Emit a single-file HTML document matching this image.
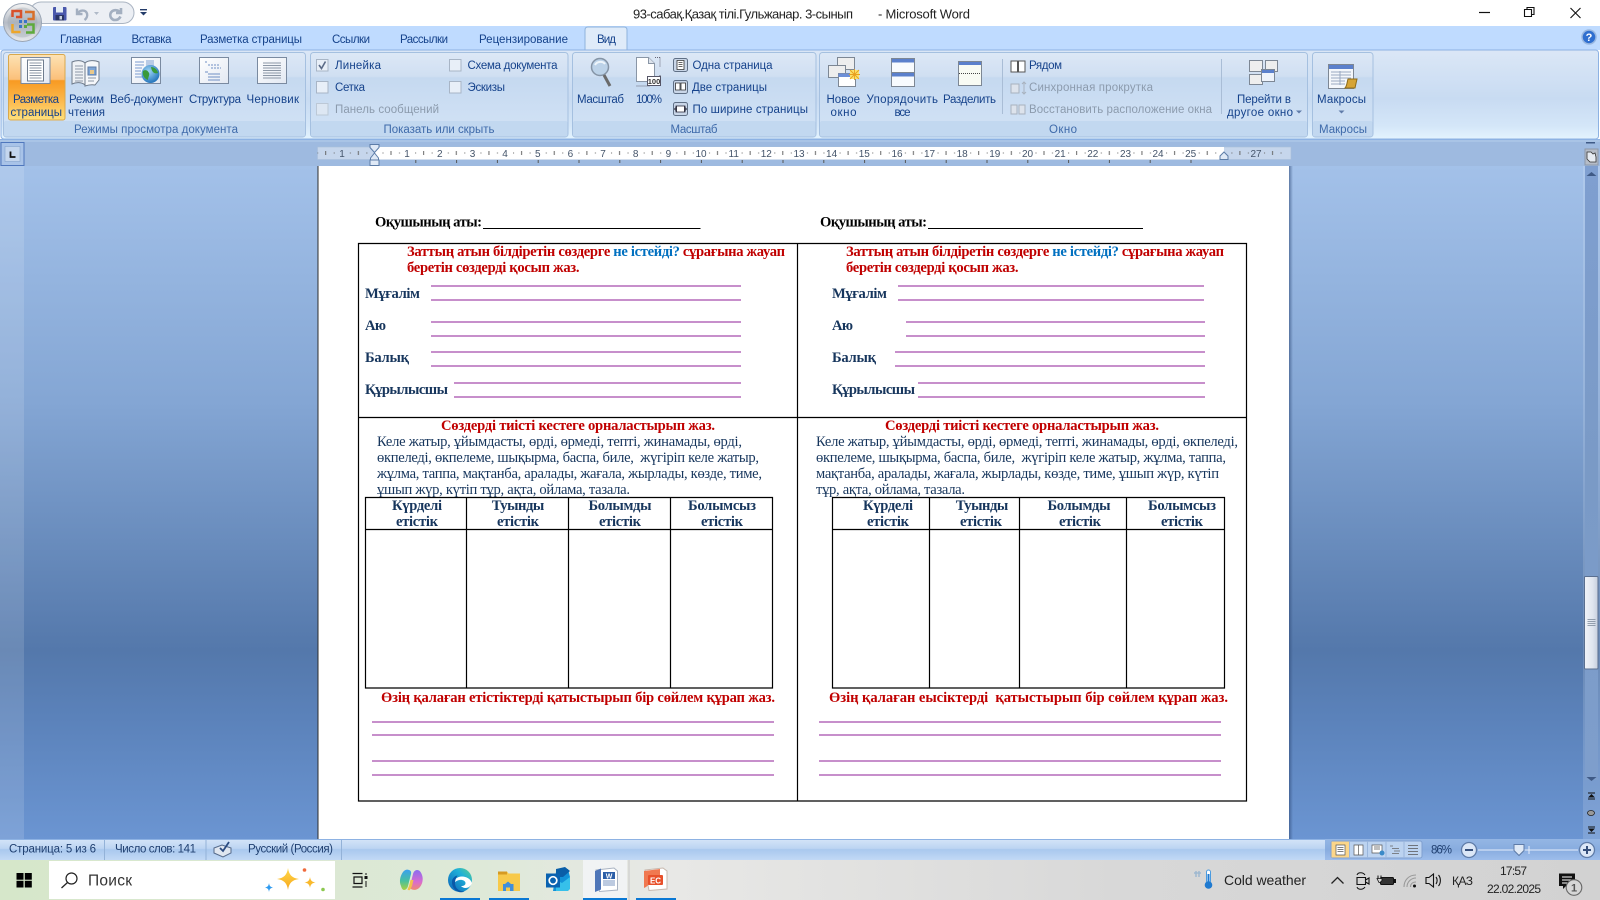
<!DOCTYPE html>
<html lang="ru">
<head>
<meta charset="utf-8">
<title>Microsoft Word</title>
<style>
html,body{margin:0;padding:0;background:#fff;width:1600px;height:900px;overflow:hidden}
svg{display:block}
text{white-space:pre}
.t{font:11.5px "Liberation Sans",sans-serif;fill:#15428b}
.g{font:11.5px "Liberation Sans",sans-serif;fill:#3e6aaa}
.d{font:11.5px "Liberation Sans",sans-serif;fill:#8c9bad}
.n{font:10px "Liberation Sans",sans-serif;fill:#44546a;text-anchor:middle}
.w{font:13px "Liberation Sans",sans-serif;fill:#222}
.s{font:11.5px "Liberation Sans",sans-serif;fill:#1f3f70}
.b{font:bold 14.6px "Liberation Serif",serif;fill:#000}
.r{font:bold 14.6px "Liberation Serif",serif;fill:#c00000}
.l{font:bold 14.6px "Liberation Serif",serif;fill:#17365d}
.p{font:14.6px "Liberation Serif",serif;fill:#17365d}
.c{font:bold 14.6px "Liberation Serif",serif;fill:#17365d;text-anchor:middle}
.k{font:14px "Liberation Sans",sans-serif;fill:#222}
.m{font:12px "Liberation Sans",sans-serif;fill:#222}
.tbl{stroke:#000;stroke-width:1.2;fill:none}
.pl{stroke:#c78fcb;stroke-width:2}
</style>
</head>
<body>
<svg width="1600" height="900" viewBox="0 0 1600 900" xmlns="http://www.w3.org/2000/svg">
<defs>
<linearGradient id="bg" x1="0" y1="0" x2="0" y2="1"><stop offset="0" stop-color="#a3c1e9"/><stop offset=".35" stop-color="#84a6d4"/><stop offset=".72" stop-color="#5478ab"/><stop offset=".82" stop-color="#5b82ba"/><stop offset="1" stop-color="#6b95d2"/></linearGradient>
<linearGradient id="rib" x1="0" y1="0" x2="0" y2="1"><stop offset="0" stop-color="#dbe7f6"/><stop offset=".55" stop-color="#c8dbf2"/><stop offset=".85" stop-color="#d4e6f8"/><stop offset="1" stop-color="#e3f3fe"/></linearGradient>
<linearGradient id="grp" x1="0" y1="0" x2="0" y2="1"><stop offset="0" stop-color="#dde8f6"/><stop offset=".28" stop-color="#d0dff2"/><stop offset=".3" stop-color="#c5d9f0"/><stop offset="1" stop-color="#d3e3f6"/></linearGradient>
<linearGradient id="act" x1="0" y1="0" x2="0" y2="1"><stop offset="0" stop-color="#fde3b4"/><stop offset=".38" stop-color="#fbc07a"/><stop offset=".4" stop-color="#f89a22"/><stop offset=".7" stop-color="#fbb84c"/><stop offset="1" stop-color="#fee07c"/></linearGradient>
<linearGradient id="btn" x1="0" y1="0" x2="1" y2="1"><stop offset="0" stop-color="#fff"/><stop offset="1" stop-color="#e2e8f2"/></linearGradient>
<linearGradient id="off" x1="0" y1="0" x2="0" y2="1"><stop offset="0" stop-color="#f4f4f4"/><stop offset=".5" stop-color="#b6bcc6"/><stop offset="1" stop-color="#e8eaee"/></linearGradient>
<linearGradient id="stat" x1="0" y1="0" x2="0" y2="1"><stop offset="0" stop-color="#d5e5f8"/><stop offset=".45" stop-color="#bcd4f2"/><stop offset=".5" stop-color="#a9c8ee"/><stop offset="1" stop-color="#c2d9f5"/></linearGradient>
<linearGradient id="stat2" x1="0" y1="0" x2="0" y2="1"><stop offset="0" stop-color="#94b6e4"/><stop offset=".5" stop-color="#88acdf"/><stop offset="1" stop-color="#9dbdeb"/></linearGradient>
<linearGradient id="task" x1="0" y1="0" x2="1" y2="0"><stop offset="0" stop-color="#d6e7ca"/><stop offset=".3" stop-color="#dee9d8"/><stop offset=".42" stop-color="#e8e8e6"/><stop offset=".7" stop-color="#d8d8d8"/><stop offset="1" stop-color="#d2d2d2"/></linearGradient>
<linearGradient id="thumb" x1="0" y1="0" x2="1" y2="0"><stop offset="0" stop-color="#f0f3f8"/><stop offset=".6" stop-color="#dfe5ef"/><stop offset="1" stop-color="#c6cfdd"/></linearGradient>
<linearGradient id="track" x1="0" y1="0" x2="0" y2="1"><stop offset="0" stop-color="#7f9fd0"/><stop offset=".5" stop-color="#7a9ac6"/><stop offset="1" stop-color="#7e9ecc"/></linearGradient>
<linearGradient id="edge" x1="1" y1="0" x2="0" y2="1"><stop offset="0" stop-color="#5fd08a"/><stop offset=".35" stop-color="#1fb0d8"/><stop offset="1" stop-color="#0c62b8"/></linearGradient>
<linearGradient id="copl" x1="0" y1="0" x2="0" y2="1"><stop offset="0" stop-color="#3aa0f0"/><stop offset=".55" stop-color="#46c0a0"/><stop offset="1" stop-color="#a8d040"/></linearGradient>
<linearGradient id="copr" x1="0" y1="0" x2="0" y2="1"><stop offset="0" stop-color="#8a6cf0"/><stop offset=".6" stop-color="#d86cd0"/><stop offset="1" stop-color="#f08a70"/></linearGradient>
<linearGradient id="star" x1="0" y1="0" x2="0" y2="1"><stop offset="0" stop-color="#ffd84a"/><stop offset="1" stop-color="#f7a81e"/></linearGradient>
<linearGradient id="shade" x1="0" y1="0" x2="1" y2="0"><stop offset="0" stop-color="#2f4a78" stop-opacity=".6"/><stop offset="1" stop-color="#2f4a78" stop-opacity="0"/></linearGradient>
<radialGradient id="globe" cx=".4" cy=".35" r=".7"><stop offset="0" stop-color="#9fd6f5"/><stop offset="1" stop-color="#1d6fb8"/></radialGradient>
<g id="frame"><rect x=".5" y=".5" width="29" height="26" fill="url(#btn)" stroke="#7a8aa0"/></g>
<g id="lines"><path d="M0 0h12M0 2.500h12M0 5h12M0 7.500h12M0 10h12M0 12.500h12M0 15h12" stroke="#8c97a6" stroke-width="1" fill="none"/></g>
<pattern id="rt" x="374.5" y="147" width="32.65" height="12" patternUnits="userSpaceOnUse"><rect x="8" y="5.5" width="1" height="1" fill="#666"/><rect x="16" y="4" width="1" height="4" fill="#666"/><rect x="24.5" y="5.5" width="1" height="1" fill="#666"/></pattern>
<pattern id="tabs" x="374.5" y="160" width="40.8" height="6" patternUnits="userSpaceOnUse"><rect x="0" y="0" width="1" height="3" fill="#555"/></pattern>
</defs>

<!-- title bar -->
<rect width="1600" height="26" fill="#fff"/>
<rect x="30" y="2" width="104" height="21.500" rx="11" fill="#eceff4" stroke="#aab4c2"/>
<!-- QAT icons -->
<rect x="53" y="7" width="13.500" height="13.500" rx="1" fill="#4a58ac"/><rect x="56" y="7" width="7" height="5.500" fill="#e4ecf6"/><rect x="55.500" y="15" width="8.500" height="5.500" fill="#2a3566"/><rect x="59.500" y="16" width="2.500" height="3.500" fill="#c8d2e0"/>
<path d="M77 8.500v5.500h5.500M77.500 14c1.500-4 8-5 9.500-.5 .7 2.500-.5 5-2.500 6.500" fill="none" stroke="#a3afc0" stroke-width="2.400"/>
<path d="M94 12h5l-2.500 3z" fill="#b0bac8"/>
<path d="M121 8v5h-5M120 12.500c-2-3.500-8-3-9.500 1-1 3.500 1.500 6.500 4.500 6.500s4.500-1.500 5.500-3.500" fill="none" stroke="#a3afc0" stroke-width="2.600"/>
<rect x="140" y="9" width="7" height="1.400" fill="#243c6a"/><path d="M140 12h7l-3.500 3.500z" fill="#243c6a"/>
<!-- window text -->
<text x="633" y="18.500" class="w" textLength="220">93-сабақ.Қазақ тілі.Гульжанар. 3-сынып</text>
<text x="878" y="18.500" class="w" textLength="92">- Microsoft Word</text>
<path d="M1479 12.500h11" stroke="#111" stroke-width="1.200"/>
<path d="M1524.500 9.500h7v7h-7zM1527 9.500v-2h7v7h-2.500" fill="none" stroke="#111" stroke-width="1.100"/>
<path d="M1570.500 8l10 10M1580.500 8l-10 10" stroke="#111" stroke-width="1.100"/>

<!-- tab strip -->
<rect y="26" width="1600" height="24" fill="#bfdbff"/>
<text x="60" y="43" class="t" textLength="42">Главная</text>
<text x="131.500" y="43" class="t" textLength="40">Вставка</text>
<text x="200" y="43" class="t" textLength="102">Разметка страницы</text>
<text x="332" y="43" class="t" textLength="38">Ссылки</text>
<text x="400" y="43" class="t" textLength="48">Рассылки</text>
<text x="479" y="43" class="t" textLength="89">Рецензирование</text>
<path d="M585 50.500V30q0-3 3-3h36q3 0 3 3v20.500z" fill="#dfebf9" stroke="#8fb3dc"/>
<text x="597" y="43" class="t" textLength="19">Вид</text>
<circle cx="1589" cy="37" r="7" fill="#2f6fd0" stroke="#9ab8e0" stroke-width="1.500"/><text x="1589" y="41" font-family="Liberation Sans" font-size="11" font-weight="bold" fill="#fff" text-anchor="middle">?</text>

<!-- ribbon -->
<rect x="1" y="50" width="1597.500" height="89" rx="3" fill="url(#rib)" stroke="#8db2e3"/>
<rect x="0" y="139" width="1600" height="1" fill="#8db2e3"/>
<!-- groups -->
<g fill="url(#grp)" stroke="#a5c0e0">
<rect x="3.500" y="52.500" width="302" height="84.500" rx="3"/>
<rect x="310.500" y="52.500" width="257.500" height="84.500" rx="3"/>
<rect x="572.500" y="52.500" width="243.500" height="84.500" rx="3"/>
<rect x="819.500" y="52.500" width="488" height="84.500" rx="3"/>
<rect x="1312.500" y="52.500" width="60.500" height="84.500" rx="3"/>
</g>
<g fill="#c2d8f0">
<rect x="4" y="121" width="301" height="15.500" rx="2"/>
<rect x="311" y="121" width="256.500" height="15.500" rx="2"/>
<rect x="573" y="121" width="242.500" height="15.500" rx="2"/>
<rect x="820" y="121" width="487" height="15.500" rx="2"/>
<rect x="1313" y="121" width="59.500" height="15.500" rx="2"/>
</g>
<text x="74" y="133" class="g" textLength="164">Режимы просмотра документа</text>
<text x="383.500" y="133" class="g" textLength="111">Показать или скрыть</text>
<text x="670.500" y="133" class="g" textLength="47">Масштаб</text>
<text x="1049" y="133" class="g" textLength="28">Окно</text>
<text x="1319" y="133" class="g" textLength="48">Макросы</text>

<!-- active button -->
<rect x="8.500" y="54.500" width="56.500" height="65.500" rx="2" fill="url(#act)" stroke="#d9a84c"/>
<!-- view icons -->
<g transform="translate(20.500,57)"><use href="#frame"/><rect x="7" y="3" width="16" height="21" fill="#fff" stroke="#6f7c8e"/><use href="#lines" x="9" y="6"/></g>
<!-- reading -->
<g transform="translate(71,59)"><path d="M1 3c4-2 10-2 13 1v22c-3-3-9-3-13-1z" fill="#eef1f5" stroke="#6e7a8a"/><path d="M14 4c3-3 10-3 14-1v18l-4 5c-3-.5-7 0-10 1z" fill="#f5f7fa" stroke="#6e7a8a"/><path d="M4 7h8M4 10h8M4 13h8M4 16h8M4 19h8M4 22h8" stroke="#8c97a6"/><rect x="17" y="8" width="8" height="8" fill="#7fa6d6" stroke="#5d7ca8"/><rect x="19" y="11" width="4" height="4" fill="#e9c88a"/><path d="M17 19h8M17 22h6" stroke="#8c97a6"/></g>
<!-- web -->
<g transform="translate(131,57)"><use href="#frame"/><path d="M4 5h9M4 8h9M4 11h7M4 14h6M4 17h6M4 20h7" stroke="#7a9bd0"/><rect x="15" y="3" width="8" height="6" fill="#b9cbe6"/><circle cx="19.500" cy="17" r="9" fill="url(#globe)"/><path d="M12 14c3-2 5 0 6 2s-1 4-1 7c-3-1-6-4-5-9zM20 10c3 0 6 2 7 6-3 1-6 0-7-6z" fill="#3a9a3a"/></g>
<!-- structure -->
<g transform="translate(199,57)"><use href="#frame"/><path d="M6 5h3M9 8h11M12 11h10" stroke="#6f8fc4" stroke-dasharray="2 1"/><path d="M6 15h3M9 17h12M9 20h12M9 23h12" stroke="#6f8fc4"/></g>
<!-- draft -->
<g transform="translate(257,57)"><use href="#frame"/><path d="M6 6h18M6 8.500h18M6 11h18M6 13.500h18M6 16h18M6 18.500h18M6 21h18" stroke="#8c97a6"/></g>
<text x="13" y="103" class="t" textLength="46">Разметка</text><text x="10.500" y="116" class="t" textLength="51.500">страницы</text>
<text x="69" y="103" class="t" textLength="35">Режим</text><text x="68" y="116" class="t" textLength="37">чтения</text>
<text x="110" y="103" class="t" textLength="73">Веб-документ</text>
<text x="189" y="103" class="t" textLength="52">Структура</text>
<text x="246.500" y="103" class="t" textLength="52.500">Черновик</text>
<!-- checkboxes -->
<g fill="#e8eff8" stroke="#a8b5c6">
<rect x="316.500" y="59.500" width="11.500" height="11.500"/>
<rect x="316.500" y="81.500" width="11.500" height="11.500"/>
<rect x="449.500" y="59.500" width="11.500" height="11.500"/>
<rect x="449.500" y="81.500" width="11.500" height="11.500"/>
</g>
<rect x="316.500" y="103.500" width="11.500" height="11.500" fill="#dde7f3" stroke="#bcc8d6"/>
<path d="M319 65l2.500 3.500 4-7" fill="none" stroke="#5b6b88" stroke-width="1.600"/>
<text x="335" y="69" class="t" textLength="46">Линейка</text>
<text x="335" y="91" class="t" textLength="30">Сетка</text>
<text x="335" y="113" class="d" textLength="104">Панель сообщений</text>
<text x="467.500" y="69" class="t" textLength="90">Схема документа</text>
<text x="467.500" y="91" class="t" textLength="37.500">Эскизы</text>
<!-- zoom group -->
<g transform="translate(591,57)"><circle cx="9" cy="10" r="8.500" fill="#bcd2e8" stroke="#8594a6" stroke-width="1.500"/><path d="M4 8c2-4 8-4 10-1" fill="none" stroke="#eef5fb" stroke-width="2"/><path d="M13 18l6 11" stroke="#6a6a6a" stroke-width="3"/></g>
<text x="577" y="103" class="t" textLength="47">Масштаб</text>
<g transform="translate(636,57)"><path d="M.500 .500h12l6 6v18h-18z" fill="#fff" stroke="#8a96a6"/><path d="M12.500 .500v6h6" fill="#dde3ec" stroke="#8a96a6"/><path d="M19 .500h5M24 .500v10M24 18v6" stroke="#667" stroke-dasharray="1 1"/><path d="M.500 29h14" stroke="#667" stroke-dasharray="1 1"/><rect x="11.500" y="19.500" width="13" height="9" fill="#fff" stroke="#556"/><text x="18" y="27" font-family="Liberation Sans" font-size="7.500" font-weight="bold" fill="#333" text-anchor="middle">100</text></g>
<text x="636" y="103" class="t" textLength="26">100%</text>
<g fill="#c9d6e8" stroke="#5f6f85"><rect x="673.500" y="58.500" width="14" height="13" rx="2"/><rect x="673.500" y="80.500" width="14" height="13" rx="2"/><rect x="673.500" y="102.500" width="14" height="13" rx="2"/></g>
<path d="M677 60.500h7v9h-7zM678.500 62.500h4M678.500 64.500h4M678.500 66.500h4" fill="#fff" stroke="#333" stroke-width=".8"/>
<path d="M675.500 83h4.500v7h-4.500zM681 83h4.500v7H681z" fill="#fff" stroke="#333" stroke-width=".8"/>
<path d="M676 106h9v6h-9zM674.500 109l2-2v4zM686.500 109l-2-2v4z" fill="#fff" stroke="#223" stroke-width=".8"/>
<text x="692.500" y="69" class="t" textLength="80">Одна страница</text>
<text x="692" y="91" class="t" textLength="75">Две страницы</text>
<text x="692.500" y="113" class="t" textLength="115.500">По ширине страницы</text>
<!-- window group -->
<g transform="translate(828,57)"><rect x="9.500" y=".500" width="17" height="12" fill="#eee" stroke="#7d8794"/><rect x=".500" y="8.500" width="17" height="12" fill="#eee" stroke="#7d8794"/><rect x="10.500" y="16.500" width="17" height="13" fill="#fff" stroke="#7d8794"/><rect x="10.500" y="16.500" width="17" height="3.500" fill="#6d8fd8"/><rect x="22" y="13" width="9" height="9" fill="#fbe26a"/><path d="M22 13l9 9M31 13l-9 9M26.500 12v11M21 17.500h11" stroke="#e8a020" stroke-width=".9"/></g>
<text x="826.500" y="103" class="t" textLength="33.500">Новое</text><text x="830.500" y="116" class="t" textLength="26">окно</text>
<g transform="translate(891,58)"><rect x=".500" y=".500" width="23" height="28" fill="#f8fbfe" stroke="#7d8794"/><rect x="1" y="1" width="22" height="3.500" fill="#5b80cc"/><rect x="1" y="15" width="22" height="3.500" fill="#5b80cc"/><path d="M.500 14.500h23" stroke="#7d8794"/></g>
<text x="866.500" y="103" class="t" textLength="71.500">Упорядочить</text><text x="894.500" y="116" class="t" textLength="16">все</text>
<g transform="translate(958,61)"><rect x=".500" y=".500" width="23" height="24" fill="#f8fbf4" stroke="#7d8794"/><rect x="1" y="1" width="22" height="3" fill="#5b80cc"/><path d="M1 12.500h22" stroke="#444" stroke-dasharray="1 1"/></g>
<text x="943" y="103" class="t" textLength="53">Разделить</text>
<path d="M1002.500 59v55M1221.500 59v55" stroke="#a9bdd6"/>
<path d="M1011 61h6.500v11h-6.500zM1018.500 61h6.500v11h-6.500z" fill="#fff" stroke="#555"/>
<path d="M1011 84h8v9h-8z" fill="#dde3ec" stroke="#a8b2be"/><path d="M1024 82v12M1022 84l2-2 2 2M1022 92l2 2 2-2" fill="none" stroke="#a8b2be"/>
<path d="M1011 105h6v9h-6zM1019 105h6v9h-6z" fill="#dde3ec" stroke="#a8b2be"/>
<text x="1029" y="69" class="t" textLength="33">Рядом</text>
<text x="1029" y="91" class="d" textLength="124">Синхронная прокрутка</text>
<text x="1029" y="113" class="d" textLength="183">Восстановить расположение окна</text>
<g transform="translate(1249,60)" stroke="#7d8794"><rect x=".500" y=".500" width="13" height="11" fill="#eee"/><rect x="16.500" y=".500" width="12" height="11" fill="#eee"/><rect x=".500" y="14.500" width="13" height="10" fill="#eee"/><rect x="12.500" y="9.500" width="13" height="12" fill="#eef3fb"/><rect x="13" y="10" width="12" height="3" fill="#5b80cc" stroke="none"/></g>
<text x="1237" y="103" class="t" textLength="54">Перейти в</text><text x="1227" y="116" class="t" textLength="66">другое окно</text>
<path d="M1296 110.500h6l-3 3z" fill="#5f7ba8"/>
<!-- macros -->
<g transform="translate(1328,64)"><rect x=".500" y=".500" width="25" height="24" fill="#f4f7fb" stroke="#7d8794"/><rect x="1" y="1" width="24" height="4" fill="#5b80cc"/><path d="M3 8h20M3 11h20M3 14h20M3 17h14M3 20h14M12 7v14" stroke="#9aa9c0"/><path d="M20 15h9l-2 9h-10c2-2 2-6 3-9z" fill="#d6a436" stroke="#8d6b18"/></g>
<text x="1317" y="103" class="t" textLength="49">Макросы</text>
<path d="M1338.500 110.500h6l-3 3z" fill="#5f7ba8"/>

<!-- ruler bar -->
<rect y="140" width="1600" height="26" fill="#9ebae0"/>
<rect x="0" y="140" width="1600" height="2" fill="#a9c4e6"/>
<rect x="317.500" y="147" width="973.500" height="12.500" fill="#c6d6ec" stroke="#a9bedb" stroke-width=".6"/>
<rect x="375" y="147" width="849" height="12.500" fill="#fff"/>
<rect x="317.500" y="147" width="973.500" height="12.500" fill="url(#rt)"/>
<rect x="375" y="160" width="849" height="4" fill="url(#tabs)"/>
<text x="342" y="157" class="n">1</text>
<text x="407" y="157" class="n">1</text><text x="439.800" y="157" class="n">2</text><text x="472.500" y="157" class="n">3</text><text x="505" y="157" class="n">4</text><text x="537.800" y="157" class="n">5</text><text x="570.400" y="157" class="n">6</text><text x="603" y="157" class="n">7</text><text x="635.700" y="157" class="n">8</text><text x="668.400" y="157" class="n">9</text><text x="701" y="157" class="n">10</text><text x="733.700" y="157" class="n">11</text><text x="766.300" y="157" class="n">12</text><text x="799" y="157" class="n">13</text><text x="831.600" y="157" class="n">14</text><text x="864.300" y="157" class="n">15</text><text x="897" y="157" class="n">16</text><text x="929.500" y="157" class="n">17</text><text x="962.200" y="157" class="n">18</text><text x="994.800" y="157" class="n">19</text><text x="1027.500" y="157" class="n">20</text><text x="1060.200" y="157" class="n">21</text><text x="1092.800" y="157" class="n">22</text><text x="1125.500" y="157" class="n">23</text><text x="1158" y="157" class="n">24</text><text x="1190.700" y="157" class="n">25</text><text x="1256" y="157" class="n">27</text>
<path d="M370 144.500h9v3l-4.500 5-4.500-5zM370.500 158l4-5 4 5v2h-8z" fill="#dfe9f6" stroke="#5d7da8"/><rect x="370" y="160" width="9" height="5.500" fill="#dfe9f6" stroke="#5d7da8"/>
<path d="M1224 152l4 4v3.500h-8V156z" fill="#dfe9f6" stroke="#5d7da8"/>
<!-- tab selector -->
<rect x="1" y="142.500" width="23" height="23" fill="#a8c3e8" stroke="#4f77bd"/><rect x="5" y="146.500" width="15" height="15" fill="#c4d6ee" stroke="#86a4cd" stroke-width=".6"/><path d="M10.500 151.500v5.500h5" fill="none" stroke="#111" stroke-width="1.800"/>

<!-- doc bg -->
<rect y="166" width="1600" height="673" fill="url(#bg)"/>
<rect y="166" width="24" height="673" fill="#fff" opacity=".13"/>
<rect x="1583" y="166" width="17" height="673" fill="#fff" opacity=".14"/>
<rect x="1585" y="166" width="13" height="614" fill="url(#track)"/>
<rect x="1585" y="149" width="13" height="16" fill="#b5bcc7" stroke="#8d98a8"/>
<path d="M1587 152h4l2 2 2-1 1 4v5h-6l-3-3z" fill="#e6ebf2" stroke="#333" stroke-width=".8"/>
<rect x="1586" y="142" width="9" height="1.500" fill="#3f5a86"/>
<path d="M1586.500 176h10l-5-4z" fill="#3f5a86"/>
<rect x="1584.500" y="576.500" width="13.500" height="92.500" rx="1" fill="url(#thumb)" stroke="#5a6f90"/>
<path d="M1587.500 619.500h8M1587.500 621.500h8M1587.500 623.500h8M1587.500 625.500h8" stroke="#7a8798" stroke-width=".8"/>
<path d="M1586.500 777h10l-5 4z" fill="#3f5a86"/>
<path d="M1588 793h7M1588 799h7" stroke="#111" stroke-width="1"/><path d="M1588 797.500h7l-3.500-3.500z" fill="#111"/>
<ellipse cx="1591" cy="813" rx="3.500" ry="2.500" fill="#999" stroke="#222" stroke-width=".8"/>
<path d="M1588 827h7M1588 833h7" stroke="#111" stroke-width="1"/><path d="M1588 828.500h7l-3.500 3.500z" fill="#111"/>

<!-- page -->
<rect x="1289" y="166" width="4" height="673" fill="url(#shade)"/>
<rect x="318" y="166" width="971" height="673" fill="#fff"/>
<rect x="317.500" y="166" width="1" height="673" fill="#2c2c2c"/>

<!-- doc content -->
<text x="375" y="226.500" class="b" textLength="107">Оқушының аты:</text>
<path d="M483 228.500h217.500" stroke="#000" stroke-width="1"/>
<text x="820" y="226.500" class="b" textLength="107">Оқушының аты:</text>
<path d="M928 228.500h215" stroke="#000" stroke-width="1"/>

<!-- outer table -->
<path class="tbl" d="M358.500 243.500H1246.500V801H358.500zM797.500 243.500V801M358.500 417.500H1246.500"/>

<!-- cell 1 -->
<text x="407" y="256" class="r" textLength="378">Заттың атын білдіретін сөздерге <tspan fill="#0070c0">не істейді?</tspan> сұрағына жауап</text>
<text x="407" y="272" class="r" textLength="172.500">беретін сөздерді қосып жаз.</text>
<text x="365" y="298" class="l" textLength="55">Мұғалім</text>
<text x="365" y="330" class="l" textLength="21">Аю</text>
<text x="365" y="362" class="l" textLength="44">Балық</text>
<text x="365" y="394" class="l" textLength="83">Құрылысшы</text>
<path class="pl" d="M431 286h310M431 300h310M431 322h310M431 336h310M431 352h310M431 366h310M454 383h287M454 397h287"/>

<!-- cell 2 -->
<text x="846" y="256" class="r" textLength="378">Заттың атын білдіретін сөздерге <tspan fill="#0070c0">не істейді?</tspan> сұрағына жауап</text>
<text x="846" y="272" class="r" textLength="172.500">беретін сөздерді қосып жаз.</text>
<text x="832" y="298" class="l" textLength="55">Мұғалім</text>
<text x="832" y="330" class="l" textLength="21">Аю</text>
<text x="832" y="362" class="l" textLength="44">Балық</text>
<text x="832" y="394" class="l" textLength="83">Құрылысшы</text>
<path class="pl" d="M898 286h306M898 300h306M906 322h299M906 336h299M895 352h310M895 366h310M918 383h287M918 397h287"/>

<!-- cell 3 -->
<text x="441" y="430" class="r" textLength="274">Сөздерді тиісті кестеге орналастырып жаз.</text>
<text x="377" y="446" class="p" textLength="365">Келе жатыр, ұйымдасты, өрді, өрмеді, тепті, жинамады, өрді,</text>
<text x="377" y="462" class="p" textLength="382">өкпеледі, өкпелеме, шықырма, баспа, биле,  жүгіріп келе жатыр,</text>
<text x="377" y="478" class="p" textLength="385">жұлма, таппа, мақтанба, аралады, жағала, жырлады, көзде, тиме,</text>
<text x="377" y="494" class="p" textLength="253">ұшып жүр, күтіп тұр, ақта, ойлама, тазала.</text>
<path class="tbl" d="M365.500 497.500H772.500V688H365.500zM365.500 529.500H772.500M466.500 497.500V688M568.500 497.500V688M670.500 497.500V688"/>
<text x="417" y="510" class="c" textLength="50">Күрделі</text><text x="417" y="526" class="c" textLength="42">етістік</text>
<text x="518" y="510" class="c" textLength="52.500">Туынды</text><text x="518" y="526" class="c" textLength="42">етістік</text>
<text x="620" y="510" class="c" textLength="63">Болымды</text><text x="620" y="526" class="c" textLength="42">етістік</text>
<text x="722" y="510" class="c" textLength="68">Болымсыз</text><text x="722" y="526" class="c" textLength="42">етістік</text>
<text x="381" y="702" class="r" textLength="394">Өзің қалаған етістіктерді қатыстырып бір сөйлем құрап жаз.</text>
<path class="pl" d="M372 722h402M372 735h402M372 761h402M372 775h402"/>

<!-- cell 4 -->
<text x="885" y="430" class="r" textLength="274">Сөздерді тиісті кестеге орналастырып жаз.</text>
<text x="816" y="446" class="p" textLength="422">Келе жатыр, ұйымдасты, өрді, өрмеді, тепті, жинамады, өрді, өкпеледі,</text>
<text x="816" y="462" class="p" textLength="410">өкпелеме, шықырма, баспа, биле,  жүгіріп келе жатыр, жұлма, таппа,</text>
<text x="816" y="478" class="p" textLength="403">мақтанба, аралады, жағала, жырлады, көзде, тиме, ұшып жүр, күтіп</text>
<text x="816" y="494" class="p" textLength="149">тұр, ақта, ойлама, тазала.</text>
<path class="tbl" d="M832.500 497.500H1224.500V688H832.500zM832.500 529.500H1224.500M929.500 497.500V688M1019.500 497.500V688M1126.500 497.500V688"/>
<text x="888" y="510" class="c" textLength="50">Күрделі</text><text x="888" y="526" class="c" textLength="42">етістік</text>
<text x="982" y="510" class="c" textLength="52.500">Туынды</text><text x="981" y="526" class="c" textLength="42">етістік</text>
<text x="1079" y="510" class="c" textLength="63">Болымды</text><text x="1080" y="526" class="c" textLength="42">етістік</text>
<text x="1182" y="510" class="c" textLength="68">Болымсыз</text><text x="1182" y="526" class="c" textLength="42">етістік</text>
<text x="829" y="702" class="r" textLength="399">Өзің қалаған еысіктерді  қатыстырып бір сөйлем құрап жаз.</text>
<path class="pl" d="M819 722h402M819 735h402M819 761h402M819 775h402"/>

<!-- status bar -->
<rect y="839" width="1600" height="21" fill="url(#stat)"/>
<rect y="839" width="1600" height="1" fill="#8db2e3"/>
<path d="M104.500 840v20M206 840v20M341.500 840v20" stroke="#93b2d8"/>
<text x="9" y="852.500" class="s" textLength="87">Страница: 5 из 6</text>
<text x="115" y="852.500" class="s" textLength="81">Число слов: 141</text>
<path d="M214 848l8-3 9 3v5l-8 4-9-4z" fill="#dfe6f0" stroke="#556a8a"/><path d="M220 848l3 3 6-9" fill="none" stroke="#2a4a80" stroke-width="1.800"/>
<text x="248" y="852.500" class="s" textLength="85">Русский (Россия)</text>
<rect x="1325" y="839" width="275" height="21" fill="url(#stat2)"/>
<rect x="1331" y="841" width="91" height="17" rx="2" fill="#bcd3f0" stroke="#7f9fcf"/>
<rect x="1331.500" y="841.500" width="18" height="16" fill="#fcd68a"/>
<path d="M1349.500 841v17M1367.500 841v17M1386 841v17M1404 841v17" stroke="#9ab6dc"/>
<path d="M1336 845h9v10h-9zM1337.500 847.500h6M1337.500 849.500h6M1337.500 851.500h6" fill="#fff" stroke="#555" stroke-width=".7"/>
<path d="M1354 845h4.500v10H1354zM1358.500 845h4.500v10h-4.500z" fill="#fff" stroke="#555" stroke-width=".7"/>
<path d="M1372 845h10v8h-10zM1374 847h6M1374 849h6" fill="#fff" stroke="#555" stroke-width=".7"/><circle cx="1382" cy="853" r="2.500" fill="#3a8ac8"/>
<path d="M1390 846h3M1392 848.500h7M1394 851h6M1392 853.500h7" stroke="#666" stroke-width=".8"/>
<path d="M1408 845.500h10M1408 848.500h10M1408 851.500h10M1408 854.500h10" stroke="#555" stroke-width=".8"/>
<text x="1431" y="853.500" class="s" fill="#15428b" textLength="21">86%</text>
<circle cx="1469" cy="850" r="7.500" fill="#dbe7f7" stroke="#5f7ca8" stroke-width="1.300"/><path d="M1465 850h8" stroke="#36507c" stroke-width="2"/>
<path d="M1478 850h100" stroke="#e6eefb" stroke-width="1"/><path d="M1529 846v8" stroke="#e6eefb"/>
<path d="M1514 844.500h10v6l-5 5-5-5z" fill="#dfe9f6" stroke="#5f7ca8"/>
<circle cx="1587" cy="850" r="7.500" fill="#dbe7f7" stroke="#5f7ca8" stroke-width="1.300"/><path d="M1583 850h8M1587 846v8" stroke="#36507c" stroke-width="2"/>

<!-- taskbar -->
<rect y="860" width="1600" height="40" fill="url(#task)"/>
<g fill="#000"><rect x="16.500" y="873" width="7" height="6.700"/><rect x="24.800" y="873" width="7" height="6.700"/><rect x="16.500" y="880.800" width="7" height="6.700"/><rect x="24.800" y="880.800" width="7" height="6.700"/></g>
<rect x="49" y="861" width="286" height="38" fill="#fff"/>
<circle cx="71.500" cy="878.500" r="5.500" fill="none" stroke="#222" stroke-width="1.200"/><path d="M67.500 882.500l-6 5.500" stroke="#222" stroke-width="1.300"/>
<text x="88" y="885.500" font-family="Liberation Sans" font-size="15.500" fill="#333" textLength="44">Поиск</text>
<path d="M288 868c1 7 4 10 11 11-7 1-10 4-11 11-1-7-4-10-11-11 7-1 10-4 11-11z" fill="url(#star)"/>
<path d="M310 877c.5 3.500 2 5 5.500 5.500-3.500.5-5 2-5.500 5.500-.5-3.500-2-5-5.500-5.500 3.500-.5 5-2 5.500-5.500z" fill="#f9b92c"/>
<path d="M269 883c.4 3 1.500 4 4 4.500-2.500.5-3.600 1.500-4 4.500-.4-3-1.500-4-4-4.500 2.500-.5 3.600-1.500 4-4.500z" fill="#2f9bf0"/>
<circle cx="304.500" cy="870" r="1.800" fill="#f06a3c"/><circle cx="323" cy="889.500" r="1.800" fill="#8cc850"/>
<!-- task view -->
<path d="M352.500 873.500h10M352.500 887h10M354 877h8v6.500h-8z" fill="none" stroke="#111" stroke-width="1.200"/><rect x="364.500" y="876" width="3" height="3" fill="#111"/><path d="M366 873v2M366 881v6" stroke="#111"/>
<!-- copilot -->
<path d="M401 886c-2-4-1-10 2-14 1.500-2 4-3 6-2 2 .5 2.500 2.500 2 4l-3 12c-.5 2-2 4-4 4-1.500 0-2.500-2-3-4z" fill="url(#copl)"/>
<path d="M413 874c.5-2 2-4 4-4 2.500 0 4 2 5 5 1.500 4 .5 9-2 12-2 2.500-5 3.500-8 2.500-2-.5-2.500-2-2-3.500z" fill="url(#copr)"/>
<path d="M409 886l1.500-6h3l-1.500 6-2 4c-1 .5-2 0-2.500-.5z" fill="#f2c14e"/>
<!-- edge -->
<circle cx="460" cy="880" r="12" fill="url(#edge)"/><path d="M453 885c0-5 4-8.500 9-8.500 4.500 0 8.500 2.500 10 6.500-1 3-3.500 5-6.500 5-2 0-3.500-1-4.500-2 3 0 4.500-1 4.500-3 0-2-3-3.500-6-3s-5.500 2.500-6.500 5z" fill="#fff"/><path d="M458 891.500c-4-1.500-6.500-6-6-10.500.5-3 3-5 5.500-5.500-2.500 3.500-3 7.500-2 10.500 1 3 4 5.500 9 5.500-2.500 1-5 1-6.500 0z" fill="#0a58a8"/>
<!-- explorer -->
<path d="M498 871.500h9l1.500 2h11.500v17.500h-22z" fill="#f7c94a"/><rect x="498" y="871.500" width="9" height="3" fill="#d69a22"/><path d="M503 891v-7h2l3-2.500 3 2.500h2.500v7h-3.500v-3.500h-4v3.500z" fill="#3f8edb"/>
<!-- outlook -->
<path d="M556 872l12-3 2 8v12l-5 2h-12z" fill="#1292d8"/><path d="M556 869l9-2 5 4-7 6h-7z" fill="#0a5fa8"/><path d="M570 877l-8 6-6-3v11h12l2-2z" fill="#36c0ea"/><rect x="546" y="873.500" width="14" height="14" fill="#0a62b0"/><circle cx="553" cy="880.500" r="3.800" fill="none" stroke="#fff" stroke-width="1.700"/>
<!-- word active -->
<rect x="583" y="860" width="44" height="40" fill="#f1f3f4"/>
<path d="M596 870l18-2 3.500 3v19l-18 1.500z" fill="#fff" stroke="#a9b3c2"/><path d="M595 871l6-2.500v21l-6 2.500z" fill="#4f76b8"/><rect x="603" y="872" width="12" height="7" fill="#2c5fa8"/><text x="609" y="878.500" font-family="Liberation Sans" font-size="7" font-weight="bold" fill="#fff" text-anchor="middle">W</text><path d="M603 881h12M603 883h12M603 885h12" stroke="#7a94c0"/>
<!-- ppt -->
<path d="M645 870l18-2 4 3v18l-18 1.500z" fill="#fff" stroke="#c8b8ae"/><path d="M644 871l16-2v6l-14 12-2 1z" fill="#f07850"/><rect x="648" y="875" width="15" height="10" rx="1" fill="#e8502a"/><text x="655.500" y="883.500" font-family="Liberation Sans" font-size="8" font-weight="bold" fill="#fff" text-anchor="middle">ЕС</text>
<path d="M629 860v40" stroke="#c8c8c8"/>
<g fill="#0a78d4"><rect x="440" y="898" width="40" height="2"/><rect x="489" y="898" width="40" height="2"/><rect x="583" y="898" width="44" height="2"/><rect x="636" y="898" width="40" height="2"/></g>
<!-- tray -->
<rect x="1206.500" y="870" width="4" height="13" rx="2" fill="#fff" stroke="#4a9be0"/><circle cx="1208.500" cy="885" r="3.800" fill="#1f7ad0"/><rect x="1207.500" y="874" width="2" height="9" fill="#1f7ad0"/><path d="M1194 873h7M1196 871v6M1199 871v6" stroke="#9fb8d0" stroke-width="1.500"/>
<text x="1224" y="885" class="k" textLength="82">Cold weather</text>
<path d="M1331.500 883.500l6-6 6 6" fill="none" stroke="#222" stroke-width="1.300"/>
<path d="M1357 877.500h8.500v7h-8.500zM1365.500 880l3.500-2v6l-3.500-2z" fill="none" stroke="#111" stroke-width="1.100"/><path d="M1357 875c1-3 6-3 8 0M1357 887c1 3 6 3 8 0" fill="none" stroke="#111"/>
<rect x="1380.500" y="877.500" width="13" height="7" rx="1" fill="#333" stroke="#111"/><rect x="1394" y="879" width="2" height="4" fill="#111"/><path d="M1378 875.500v3M1381 875.500v3" stroke="#111"/><path d="M1377 878.500h5v2l-2 2h-1z" fill="#d6d6d6" stroke="#111" stroke-width=".8"/>
<path d="M1404 887c0-7 5-12 12-12M1407 887c0-5 4-9 9-9M1410.500 887c0-3 2-5 5.500-5" fill="none" stroke="#9a9a9a" stroke-width="1.100"/><circle cx="1414.500" cy="886" r="1.500" fill="#111"/>
<path d="M1426 877.500h3l4.500-3.500v13l-4.500-3.500h-3z" fill="none" stroke="#111" stroke-width="1.100"/><path d="M1436 877c1.500 2 1.500 5 0 7M1438.500 875c2.500 3 2.500 8 0 11" fill="none" stroke="#111" stroke-width="1.100"/>
<text x="1452" y="885" class="m" textLength="21">ҚАЗ</text>
<text x="1500" y="875" class="m" textLength="27">17:57</text>
<text x="1487" y="893" class="m" textLength="54">22.02.2025</text>
<path d="M1559 873.500h16v12.500h-9l-3 3v-3h-4z" fill="#111"/><path d="M1562 877h10M1562 880h10M1562 883h6" stroke="#fff"/>
<circle cx="1574" cy="887.500" r="7.800" fill="#d6d6d6" stroke="#666" stroke-width="1.100"/><text x="1574" y="891.500" font-family="Liberation Sans" font-size="11" font-weight="bold" fill="#555" text-anchor="middle">1</text>

<!-- office button on top -->
<circle cx="22.500" cy="22.500" r="19" fill="url(#off)" stroke="#9aa5b4"/>
<circle cx="22.500" cy="22.500" r="15" fill="#9aa3ad" opacity=".35"/>
<g stroke-width="2.500" fill="none">
<path d="M12.500 17v-6h8.500v6h-5" stroke="#d8502a"/>
<path d="M25 12h8.500v7h-6" stroke="#d8702a"/>
<path d="M12.500 24v8h8" stroke="#eda62a"/>
<path d="M26 32.500h7.500v-8h-6.500" stroke="#5eaa3c"/>
</g>
<g fill="#3a74c8"><rect x="19" y="20" width="3" height="3"/><rect x="24" y="20" width="3" height="3"/><rect x="19" y="25" width="3" height="3"/></g><rect x="24" y="25" width="3" height="3" fill="#5eaa3c"/>
</svg>
</body>
</html>
